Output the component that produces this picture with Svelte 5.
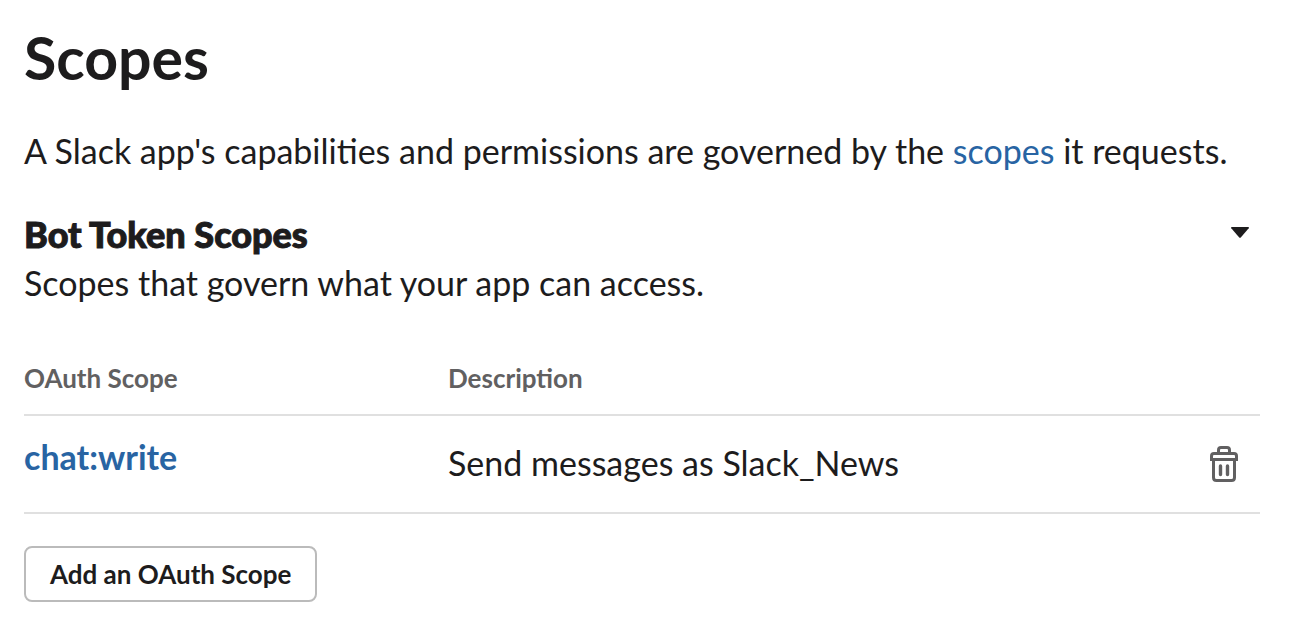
<script lang="ts">
    let open = true;

    let scopes = [
        { name: 'chat:write', description: 'Send messages as Slack_News' }
    ];

    function removeScope(name: string) {
        scopes = scopes.filter((scope) => scope.name !== name);
    }
</script>

<main>
    <h1>Scopes</h1>
    <p class="intro">
        A Slack app's capabilities and permissions are governed by the <a href="#scopes">scopes</a> it requests.
    </p>

    <div class="section-head">
        <div>
            <h2>Bot Token Scopes</h2>
            <p>Scopes that govern what your app can access.</p>
        </div>
        <button class="toggle" aria-label="Toggle Bot Token Scopes" aria-expanded={open} on:click={() => (open = !open)}>
            <svg width="20" height="14" viewBox="0 0 20 14" aria-hidden="true">
                <path d="M2 1h16q1.6 0 .7 1.300l-7.700 8.900q-1 1.100-2 0L1.300 2.300Q.4 1 2 1z" fill="#1d1c1d" />
            </svg>
        </button>
    </div>

    {#if open}
        <table>
            <thead>
                <tr>
                    <th class="name">OAuth Scope</th>
                    <th>Description</th>
                    <td class="action"></td>
                </tr>
            </thead>
            <tbody>
                {#each scopes as scope}
                    <tr>
                        <td class="name"><a href="#{scope.name}">{scope.name}</a></td>
                        <td>{scope.description}</td>
                        <td class="action">
                            <button class="delete" aria-label="Delete {scope.name}" on:click={() => removeScope(scope.name)}>
                                <svg width="28" height="38" viewBox="0 -2 28 38" fill="none" stroke="#616061" stroke-width="3" aria-hidden="true">
                                    <path d="M8.500 7V4q0-2.500 2.500-2.500h6q2.500 0 2.500 2.500v3" />
                                    <path d="M1.500 13.500V10q0-2.500 2.500-2.500h20q2.500 0 2.500 2.500v3.500z" />
                                    <path d="M3.500 14v17.500q0 3 3 3h15q3 0 3-3V14" />
                                    <path d="M10.500 20v8.500M17.500 20v8.500" stroke-width="3.400" stroke-linecap="round" />
                                </svg>
                            </button>
                        </td>
                    </tr>
                {/each}
            </tbody>
        </table>
        <button class="add">Add an OAuth Scope</button>
    {/if}
</main>

<style>
    :global(body) {
        background: #fff;
    }

    main {
        padding: 20px 48px 32px 24px;
        font-family: Lato, sans-serif;
        font-size: 34px;
        line-height: 48px;
        color: #1d1c1d;
    }

    h1, h2, p {
        margin: 0;
    }

    h1 {
        font-size: 59px;
        line-height: 75px;
        font-weight: 700;
    }

    .intro {
        margin: 32px 0 35px;
    }

    a {
        color: #2864a3;
        text-decoration: none;
    }

    .section-head {
        display: flex;
        justify-content: space-between;
        align-items: flex-start;
    }

    h2 {
        font-size: 36px;
        line-height: 49px;
        font-weight: 900;
        -webkit-text-stroke: 1px #1d1c1d;
    }

    button {
        font-family: inherit;
        cursor: pointer;
    }

    .toggle,
    .delete {
        display: block;
        padding: 0;
        border: none;
        background: none;
    }

    .toggle {
        margin: 16px 10px 0 0;
    }

    svg {
        display: block;
    }

    table {
        width: 100%;
        margin: 35px 0 32px;
        border-collapse: collapse;
        table-layout: fixed;
    }

    th,
    td {
        padding: 23px 0 25px;
        border-bottom: 2px solid #e0e0e0;
        text-align: left;
    }

    th {
        padding: 16px 0;
        font-size: 26px;
        line-height: 40px;
        font-weight: 700;
        color: #616061;
    }

    .name {
        width: 424px;
    }

    td.name {
        padding: 17px 0 31px;
        font-weight: 700;
    }

    .action {
        width: 50px;
    }

    thead .action {
        padding: 0;
    }

    .add {
        height: 56px;
        padding: 0 24px;
        border: 2px solid #bbbbbb;
        border-radius: 8px;
        background: #fff;
        font-size: 26px;
        font-weight: 700;
        color: #1d1c1d;
    }
</style>
